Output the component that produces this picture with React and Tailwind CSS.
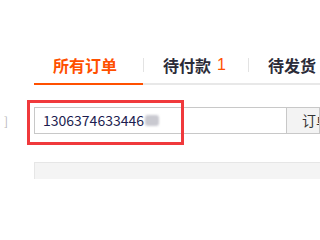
import React from "react";

const font = { fontFamily: '"Microsoft YaHei", "Noto Sans CJK SC", "Liberation Sans", sans-serif' };

function Sep() {
  return (
    <div className="flex items-center h-[37px] border-b-2 border-[#e8e8e8] box-content">
      <div className="w-px h-[14px] bg-[#e3e3e3]" />
    </div>
  );
}

export default function App() {
  return (
    <div className="w-[320px] h-[240px] bg-white overflow-hidden relative" style={font}>
      {/* Tabs */}
      <div className="flex mt-[46px] ml-[34px]">
        <div className="h-[37px] box-content border-b-2 border-[#ff5000] pl-[19px] pr-[26px] flex items-center text-[16px] leading-[24px] text-[#ff5000] font-semibold">
          所有订单
        </div>
        <Sep />
        <div className="h-[37px] box-content border-b-2 border-[#e8e8e8] pl-[19px] pr-[22px] flex items-center text-[16px] leading-[24px] text-[#2b2b38] font-semibold whitespace-nowrap">
          待付款<span className="ml-[6px] text-[#ff5000] font-normal" style={{ fontFamily: '"Liberation Sans", sans-serif' }}>1</span>
        </div>
        <Sep />
        <div className="flex-1 h-[37px] box-content border-b-2 border-[#e8e8e8] pl-[19px] flex items-center text-[16px] leading-[24px] text-[#2b2b38] font-semibold whitespace-nowrap">
          待发货
        </div>
      </div>

      {/* Search row */}
      <div className="flex items-center mt-[22px] h-[27px]">
        <span className="w-[34px] shrink-0 pl-[4px] text-[12px] text-[#b8b8b8]">]</span>
        <div className="w-[253px] shrink-0 h-[27px] border border-[#c8c8c8] flex items-center pl-[8px] text-[14px] text-[#1c1c50]">
          1306374633446
          <span className="inline-block w-[14px] h-[11px] ml-[1px] rounded-[3px] bg-[#c9c9d0] blur-[1px]" />
        </div>
        <div className="flex-1 min-w-0 overflow-hidden h-[27px] border border-l-0 border-[#c8c8c8] bg-[#f3f3f3] flex items-center pl-[15px] text-[14px] text-[#333] whitespace-nowrap">
          订单号
        </div>
      </div>

      {/* Gray bar */}
      <div className="ml-[34px] mt-[28px] h-[17px] bg-[#f4f4f4] border-t border-l border-[#e6e6e6]" />

      {/* Red annotation box */}
      <div className="absolute left-[27px] top-[100px] w-[157px] h-[45px] border-[3px] border-[#f0393c]" />
    </div>
  );
}
